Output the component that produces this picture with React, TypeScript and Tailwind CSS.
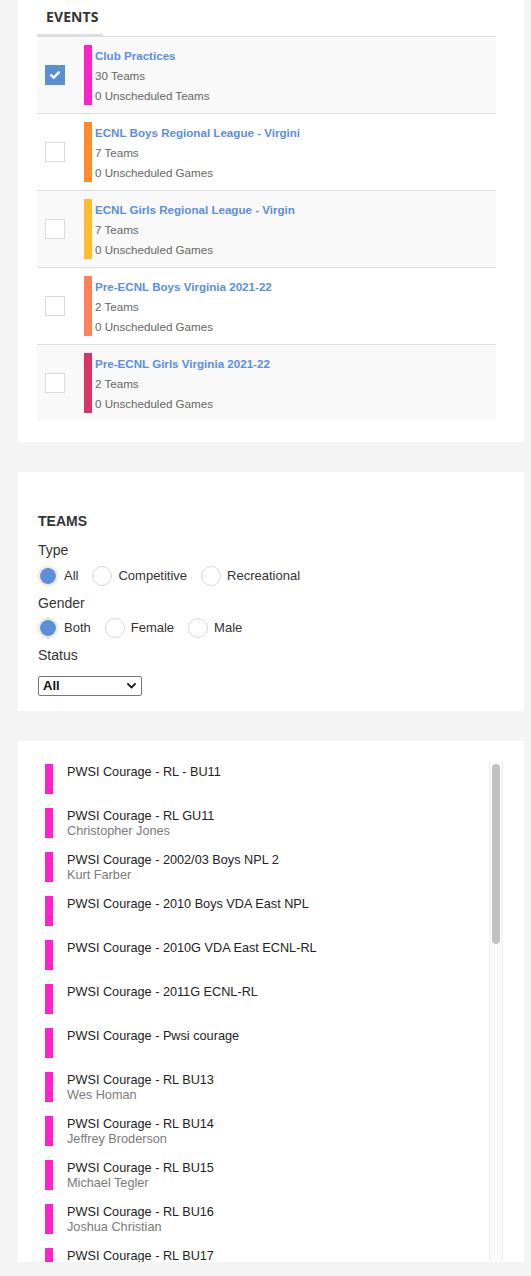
import React from "react";

const events = [
  { title: "Club Practices", teams: "30 Teams", un: "0 Unscheduled Teams", color: "bg-[#ff22cb]", checked: true },
  { title: "ECNL Boys Regional League - Virgini", teams: "7 Teams", un: "0 Unscheduled Games", color: "bg-[#ff8c28]", checked: false },
  { title: "ECNL Girls Regional League - Virgin", teams: "7 Teams", un: "0 Unscheduled Games", color: "bg-[#ffbd2e]", checked: false },
  { title: "Pre-ECNL Boys Virginia 2021-22", teams: "2 Teams", un: "0 Unscheduled Games", color: "bg-[#ff8157]", checked: false },
  { title: "Pre-ECNL Girls Virginia 2021-22", teams: "2 Teams", un: "0 Unscheduled Games", color: "bg-[#dc3366]", checked: false },
];

const teams: [string, string][] = [
  ["PWSI Courage - RL - BU11", ""],
  ["PWSI Courage - RL GU11", "Christopher Jones"],
  ["PWSI Courage - 2002/03 Boys NPL 2", "Kurt Farber"],
  ["PWSI Courage - 2010 Boys VDA East NPL", ""],
  ["PWSI Courage - 2010G VDA East ECNL-RL", ""],
  ["PWSI Courage - 2011G ECNL-RL", ""],
  ["PWSI Courage - Pwsi courage", ""],
  ["PWSI Courage - RL BU13", "Wes Homan"],
  ["PWSI Courage - RL BU14", "Jeffrey Broderson"],
  ["PWSI Courage - RL BU15", "Michael Tegler"],
  ["PWSI Courage - RL BU16", "Joshua Christian"],
  ["PWSI Courage - RL BU17", ""],
];

function Radio({ label, checked }: { label: string; checked?: boolean }) {
  return (
    <div className="flex items-center">
      <div className="w-[20px] h-[20px] rounded-full border border-[#d9d9d9] bg-white flex items-center justify-center">
        {checked && <div className="w-[16px] h-[16px] rounded-full bg-[#5b8fd6]" />}
      </div>
      <span className="ml-[6px] text-[13px] text-[#333]">{label}</span>
    </div>
  );
}

export default function App() {
  return (
    <div
      className="min-h-[1276px] bg-[#f4f4f4] pl-[18px] pr-[7px] pb-[14px] flex flex-col gap-[30px]"
      style={{ fontFamily: '"Liberation Sans", Arial, sans-serif' }}
    >
      {/* EVENTS card */}
      <div className="bg-white pl-[19px] pr-[28px] pb-[21px]">
        <div className="h-[34px] flex items-center pl-[9px] pb-[2px]">
          <span className="text-[14px] font-bold text-[#333] tracking-[0.1px]" style={{ fontFamily: '"Open Sans", sans-serif' }}>
            EVENTS
          </span>
        </div>
        <div className="h-[2px] w-[66px] bg-[#dddddd]" />
        <div>
          {events.map((e, i) => (
            <div
              key={i}
              className={`h-[77px] border-t border-[#dddddd] flex items-center ${i % 2 === 0 ? "bg-[#f9f9f9]" : "bg-white"}`}
            >
              <div className="pl-[8px] w-[47px]">
                {e.checked ? (
                  <div className="w-[20px] h-[20px] bg-[#5b8fd3] flex items-center justify-center">
                    <svg width="10" height="8" viewBox="0 0 10 8">
                      <path d="M1.2 4.2 L3.8 6.6 L8.8 1.4" fill="none" stroke="white" strokeWidth="2.4" strokeLinecap="round" strokeLinejoin="round" />
                    </svg>
                  </div>
                ) : (
                  <div className="w-[20px] h-[20px] bg-white border border-[#dadada]" />
                )}
              </div>
              <div className="flex h-[60px]">
                <div className={`w-[8px] h-[60px] ${e.color}`} />
                <div className="pl-[3px] pt-[1px] flex flex-col text-[11.6px] leading-[20px]">
                  <span className="font-bold text-[#5a8ee4]">{e.title}</span>
                  <span className="text-[#666]">{e.teams}</span>
                  <span className="text-[#666]">{e.un}</span>
                </div>
              </div>
            </div>
          ))}
        </div>
      </div>

      {/* TEAMS filter card */}
      <div className="bg-white pl-[20px] pr-[21px] pt-[39px] pb-[15px] flex flex-col">
        <div className="h-[20px] flex items-center text-[14px] font-bold text-[#333]">TEAMS</div>
        <div className="h-[20px] mt-[9px] flex items-center text-[14px] text-[#333]">Type</div>
        <div className="h-[32px] flex items-center gap-[14px]">
          <Radio label="All" checked />
          <Radio label="Competitive" />
          <Radio label="Recreational" />
        </div>
        <div className="h-[22px] flex items-center text-[14px] text-[#333]">Gender</div>
        <div className="h-[28px] flex items-center gap-[14px]">
          <Radio label="Both" checked />
          <Radio label="Female" />
          <Radio label="Male" />
        </div>
        <div className="h-[26px] flex items-center text-[14px] text-[#333]">Status</div>
        <div className="mt-[8px] w-[104px] h-[20px] border border-[#767676] rounded-[2px] bg-white flex items-center justify-between pl-[4px] pr-[5px]">
          <span className="text-[13px] font-bold text-[#111]">All</span>
          <svg width="9" height="6" viewBox="0 0 9 6">
            <path d="M1 1 L4.5 4.5 L8 1" fill="none" stroke="#222" strokeWidth="1.8" strokeLinecap="round" strokeLinejoin="round" />
          </svg>
        </div>
      </div>

      {/* Team list card */}
      <div className="bg-white h-[521px] pl-[19px] pr-[21px] pt-[20px] flex overflow-hidden">
        <div className="flex-1 pt-[3px] overflow-hidden">
          {teams.map(([t, s], i) => (
            <div key={i} className="h-[44px] flex items-start pl-[8px]">
              <div className="w-[8px] h-[30px] bg-[#ff22cb] shrink-0" />
              <div className="ml-[14px] mt-[1px] flex flex-col text-[12.7px]">
                <span className="leading-[15px] text-[#222]">{t}</span>
                {s && <span className="leading-[14px] text-[#7a7a7a]">{s}</span>}
              </div>
            </div>
          ))}
        </div>
        <div className="w-[14px] bg-[#fafafa] border-l border-r border-[#ececec] pt-[3px] flex justify-center">
          <div className="w-[8px] h-[180px] rounded-full bg-[#c1c1c1]" />
        </div>
      </div>
    </div>
  );
}
